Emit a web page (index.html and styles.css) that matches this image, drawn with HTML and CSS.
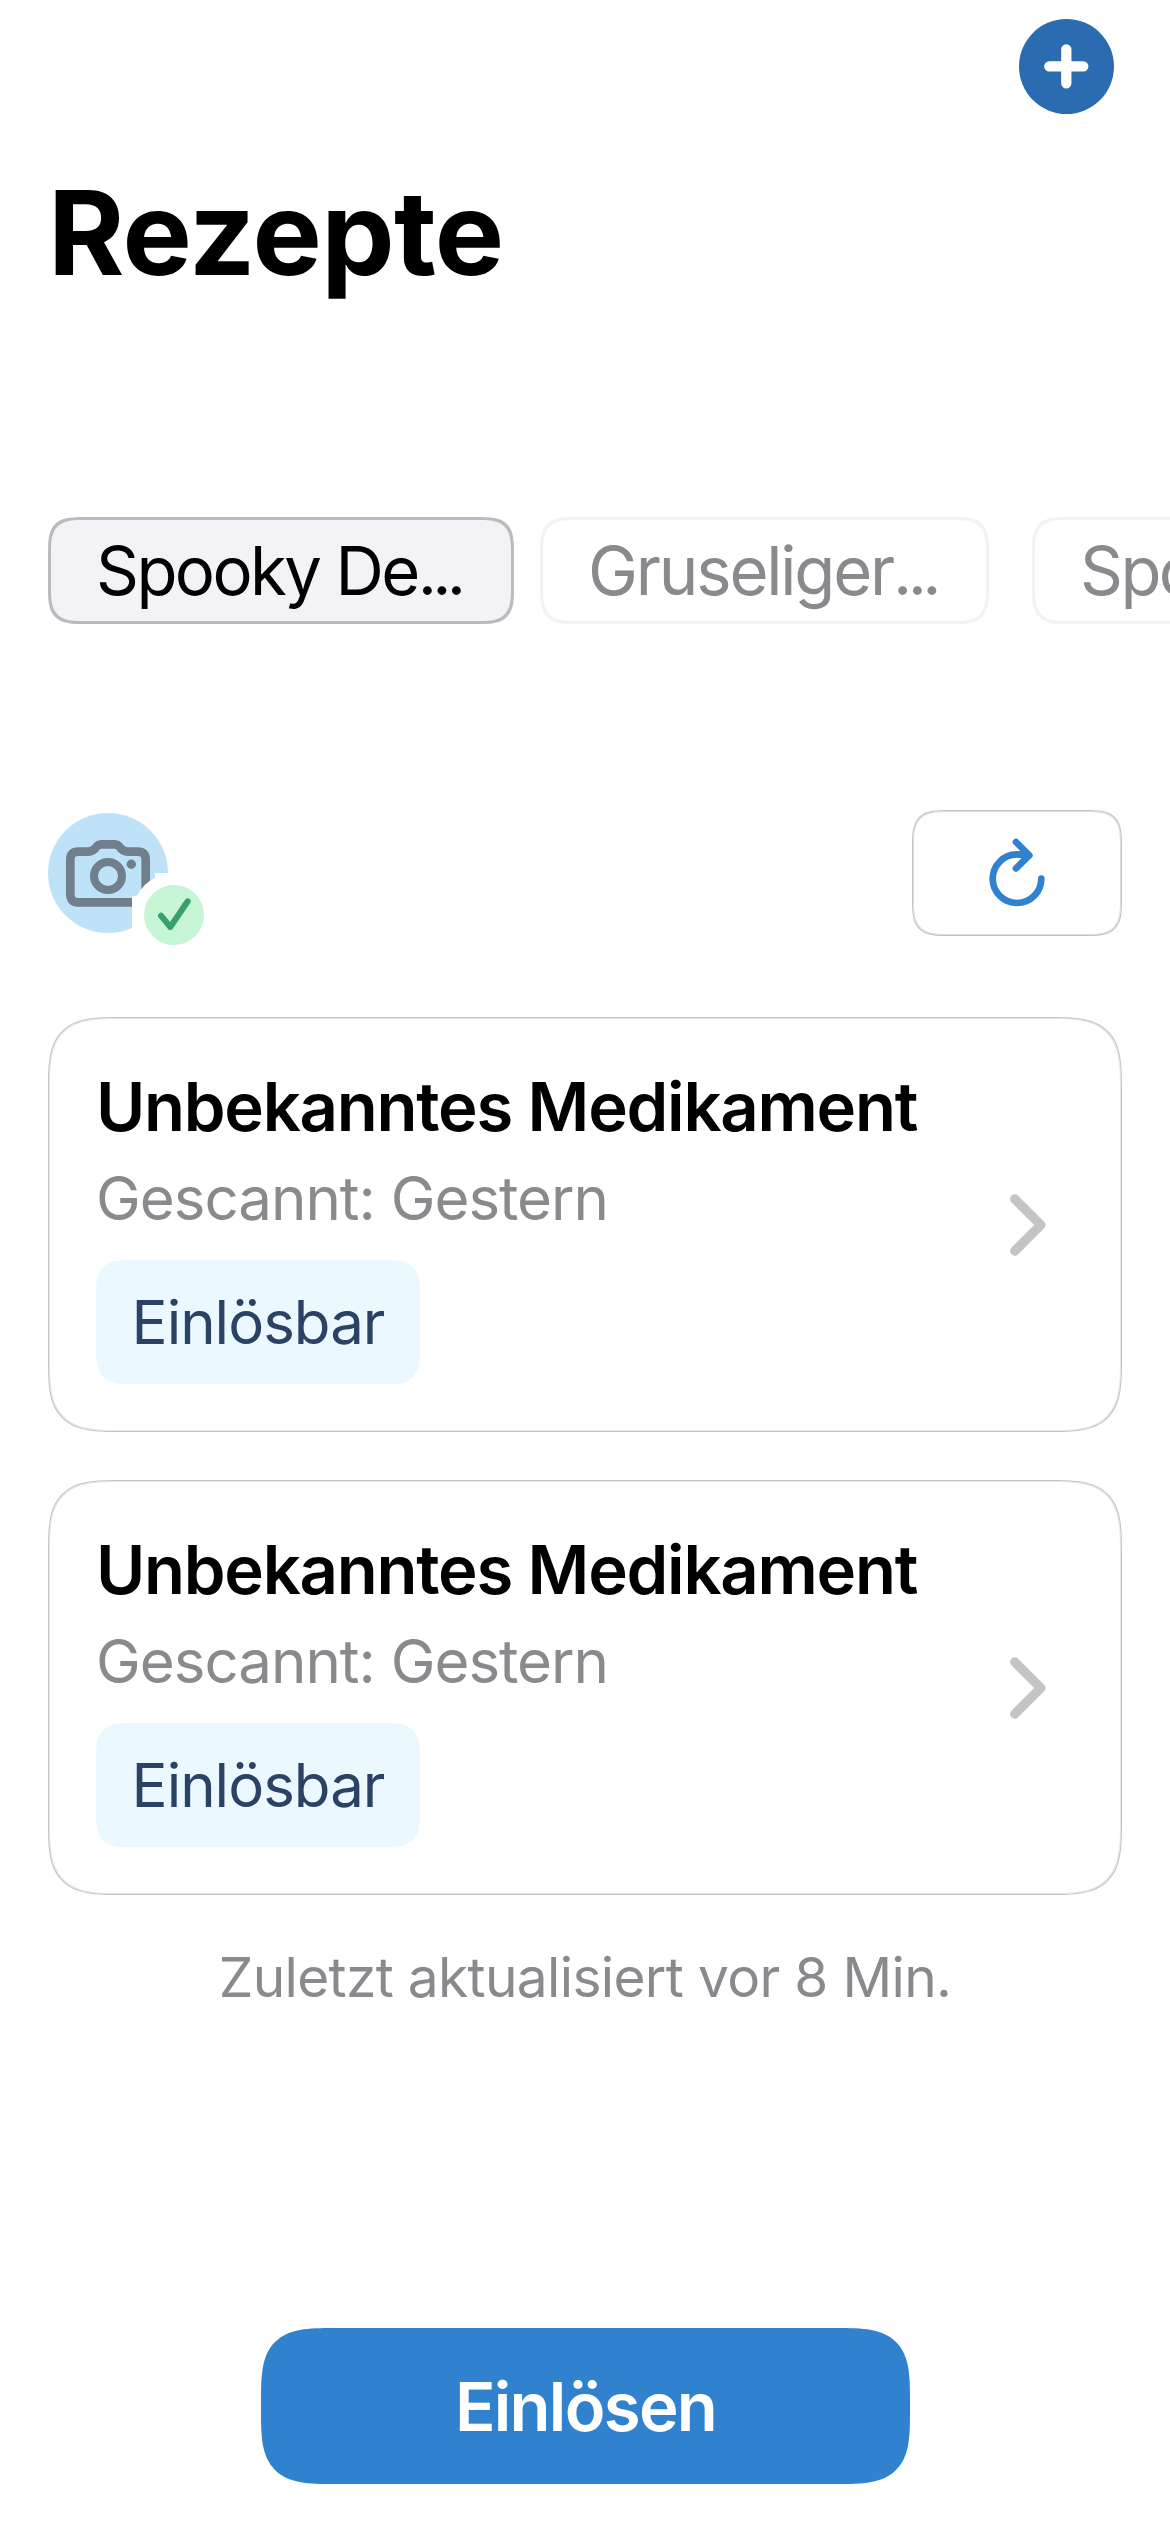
FILE: index.html
```html
<!DOCTYPE html>
<html lang="de">
<head>
<meta charset="utf-8">
<title>Rezepte</title>
<link rel="stylesheet" href="styles.css">
</head>
<body>
<main class="screen">
  <header class="topbar">
    <button class="add" aria-label="Hinzufügen">
      <svg width="95" height="95" viewBox="0 0 95 95"><path class="add-plus" d="M47.3 30.3v34M30.3 47.3h34"/></svg>
    </button>
  </header>
  <h1 class="title">Rezepte</h1>
  <nav class="chips">
    <button class="chip chip-active"><span class="chip-text chip-text-a">Spooky De<span class="dots">...</span></span></button>
    <button class="chip chip-second"><span class="chip-text chip-text-b">Gruseliger<span class="dots">...</span></span></button>
    <button class="chip chip-third"><span class="chip-text chip-text-a">Spooky De<span class="dots">...</span></span></button>
  </nav>
  <section class="profile">
    <svg class="avatar" width="168" height="144" viewBox="0 0 168 144">
      <circle cx="60" cy="60" r="60" fill="#bee3f8"/>
      <path class="camera" d="M30.300 38.700H39.500C43 38.700 44.500 38 46.500 36L47 35.500C49.300 32.300 50.500 31.300 53 31.300H67C69.500 31.300 70.700 32.300 73 35.500L73.500 36C75.500 38 77 38.700 80.500 38.700H89.700Q97.700 38.700 97.700 46.700V81.300Q97.700 89.300 89.700 89.300H30.300Q22.300 89.300 22.300 81.300V46.700Q22.300 38.700 30.300 38.700Z"/>
      <circle class="lens" cx="60" cy="63" r="14"/>
      <circle cx="83.300" cy="51.300" r="4.700" fill="#717f8c"/>
      <path d="M107 60H168V144H84V83H88.700A42 42 0 0 1 107 64.700Z" fill="#fff"/>
      <circle cx="126" cy="102" r="30" fill="#c6f6d5"/>
      <path class="check" d="M113 102.700L122.300 114L139.700 88.300"/>
    </svg>
    <button class="refresh" aria-label="Aktualisieren">
      <svg width="60" height="72" viewBox="0 0 60 72"><path class="refresh-icon" d="M54.300 38.700A24.300 24.300 0 1 1 30 14.400L41 15.300M29 2L42.300 15.300L29 28.300"/></svg>
    </button>
  </section>
  <section class="list">
    <article class="card">
      <div class="card-body">
        <h2 class="card-title">Unbekanntes Medikament</h2>
        <p class="card-sub">Gescannt: Gestern</p>
        <span class="tag"><span class="tag-text">Einlösbar</span></span>
      </div>
      <svg class="chevron" width="36" height="62" viewBox="0 0 36 62"><path d="M4.800 5L30.800 31L4.800 57"/></svg>
    </article>
    <article class="card">
      <div class="card-body">
        <h2 class="card-title">Unbekanntes Medikament</h2>
        <p class="card-sub">Gescannt: Gestern</p>
        <span class="tag"><span class="tag-text">Einlösbar</span></span>
      </div>
      <svg class="chevron" width="36" height="62" viewBox="0 0 36 62"><path d="M4.800 5L30.800 31L4.800 57"/></svg>
    </article>
  </section>
  <p class="updated">Zuletzt aktualisiert vor 8 Min.</p>
  <button class="redeem"><span class="redeem-text">Einlösen</span></button>
</main>
</body>
</html>
```
FILE: styles.css
```css
* { box-sizing: border-box; margin: 0; padding: 0; }
body { background: #fff; font-family: Inter, "Liberation Sans", sans-serif; color: #000; }
button { border: 0; background: none; font: inherit; color: inherit; }
svg { display: block; flex: none; overflow: visible; }
.screen { width: 1170px; height: 2532px; overflow: hidden; display: flex; flex-direction: column; padding: 19px 48px 48px; }
.topbar { display: flex; justify-content: flex-end; padding-right: 8px; height: 95px; }
.add { width: 95px; height: 95px; border-radius: 50%; background: #2b6cb0; }
.add-plus { stroke: #fff; stroke-width: 10.3; stroke-linecap: round; fill: none; }
.title { margin-top: 49px; height: 140px; line-height: 140px; font-size: 116.5px; font-weight: 700; letter-spacing: -0.7px; white-space: nowrap; }
.chips { margin-top: 214px; display: flex; flex: none; width: 1122px; overflow: hidden; }
.chip { flex: none; height: 107px; border: 3px solid #f2f2f7; border-radius: 24px; display: flex; align-items: center; padding-left: 45px; font-size: 67px; color: #8a8a8e; white-space: nowrap; }
.chip-active { width: 466px; background: #f2f2f7; border-color: #bbbbbf; color: #000; }
.chip-second { width: 449px; margin-left: 26px; }
.chip-third { width: 466px; margin-left: 43px; }
.chip-text-a { letter-spacing: -2.6px; }
.chip-text-b { letter-spacing: -2.2px; }
.dots { letter-spacing: -4.7px; }
.profile { margin-top: 186px; display: flex; justify-content: space-between; height: 144px; }
.avatar { margin-top: 3px; }
.camera { fill: none; stroke: #717f8c; stroke-width: 8.7; stroke-linejoin: round; }
.lens { fill: none; stroke: #717f8c; stroke-width: 8; }
.check { fill: none; stroke: #38a169; stroke-width: 6; stroke-linecap: round; stroke-linejoin: round; }
.refresh { width: 210px; height: 126px; border: 1px solid #c4c4c6; box-shadow: inset 0 0 0 1px #e0e0e1; border-radius: 24px; display: flex; align-items: flex-start; padding: 29px 0 0 73.700px; }
.refresh-icon { fill: none; stroke: #3182ce; stroke-width: 6.700; stroke-linecap: round; stroke-linejoin: round; }
.list { margin-top: 63px; display: flex; flex-direction: column; gap: 48px; }
.card { height: 415px; border: 1px solid #c4c4c6; box-shadow: inset 0 0 0 1px #e6e6e7; border-radius: 48px; padding: 47px 75px 47px 47px; display: flex; align-items: center; justify-content: space-between; }
.card-body { display: flex; flex-direction: column; align-items: flex-start; height: 319px; }
.card-title { margin-top: 1px; font-size: 67px; line-height: 82px; font-weight: 600; letter-spacing: -1.25px; white-space: nowrap; }
.card-sub { margin-top: 14px; font-size: 60px; line-height: 72px; letter-spacing: -1px; color: #8a8a8e; white-space: nowrap; }
.tag { margin-top: 26px; width: 324px; height: 124px; border-radius: 24px; background: #ebf8ff; color: #2a4365; font-size: 60px; display: flex; align-items: center; justify-content: center; }
.tag-text { letter-spacing: -1px; }
.chevron { fill: none; stroke: #c4c4c6; stroke-width: 9.500; stroke-linecap: round; stroke-linejoin: round; }
.updated { margin-top: 46px; line-height: 72px; font-size: 55px; text-align: center; color: #8a8a8e; letter-spacing: -0.65px; white-space: nowrap; }
.redeem { margin: auto auto 0 213px; width: 649px; height: 156px; border-radius: 50px; background: #3182ce; color: #fff; font-size: 67px; font-weight: 600; }
.redeem-text { letter-spacing: -1.7px; }
@supports (corner-shape: superellipse(1.7)) {
  .chip, .refresh, .tag { border-radius: 37px; corner-shape: superellipse(1.7); }
  .card, .redeem { border-radius: 73px; corner-shape: superellipse(1.7); }
}
```
